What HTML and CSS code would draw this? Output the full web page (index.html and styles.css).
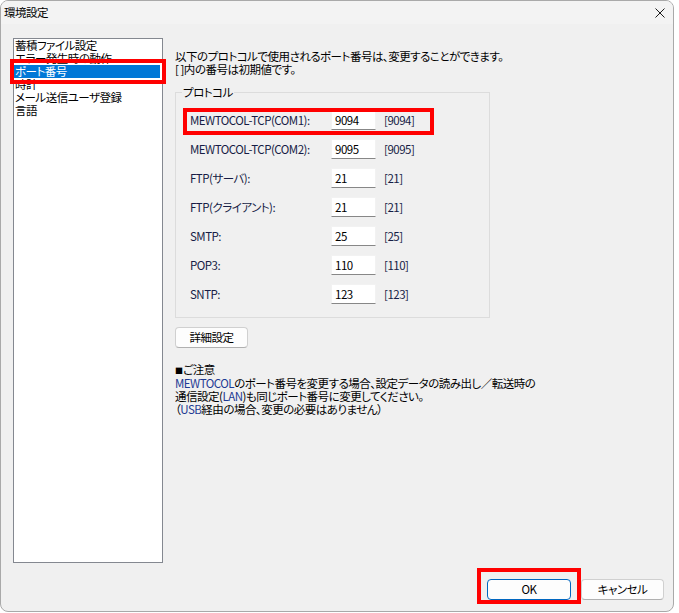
FILE: index.html
```html
<!DOCTYPE html>
<html lang="ja">
<head>
<meta charset="utf-8">
<title>環境設定</title>
<link rel="stylesheet" href="styles.css">
</head>
<body>
<div class="window">
  <div class="titlebar">
    <span class="title">環境設定</span>
    <svg class="close" width="10" height="10" viewBox="0 0 10 10"><path d="M0.5 0.5 L9.5 9.5 M9.5 0.5 L0.5 9.5" stroke="#1b1b1b" stroke-width="1" fill="none"/></svg>
  </div>
  <div class="content">
    <ul class="navlist">
      <li>蓄積ファイル設定</li>
      <li>エラー発生時の動作</li>
      <li class="selected">ポート番号</li>
      <li>時計</li>
      <li>メール送信ユーザ登録</li>
      <li>言語</li>
    </ul>
    <div class="panel">
      <p class="intro">以下のプロトコルで使用されるポート番号は、変更することができます。<br>[ ]内の番号は初期値です。</p>
      <fieldset class="group">
        <legend>プロトコル</legend>
        <div class="rows">
          <span class="lbl">MEWTOCOL-TCP(COM1):</span><input class="port" type="text" value="9094"><span class="def">[9094]</span>
          <span class="lbl">MEWTOCOL-TCP(COM2):</span><input class="port" type="text" value="9095"><span class="def">[9095]</span>
          <span class="lbl">FTP(サーバ):</span><input class="port" type="text" value="21"><span class="def">[21]</span>
          <span class="lbl">FTP(クライアント):</span><input class="port" type="text" value="21"><span class="def">[21]</span>
          <span class="lbl">SMTP:</span><input class="port" type="text" value="25"><span class="def">[25]</span>
          <span class="lbl">POP3:</span><input class="port" type="text" value="110"><span class="def">[110]</span>
          <span class="lbl">SNTP:</span><input class="port" type="text" value="123"><span class="def">[123]</span>
        </div>
      </fieldset>
      <button class="btn detail" type="button">詳細設定</button>
      <p class="note"><span class="sq">■</span>ご注意<br><span class="lat">MEWTOCOL</span>のポート番号を変更する場合、設定データの読み出し／転送時の<br>通信設定(<span class="lat">LAN</span>)も同じポート番号に変更してください。<br>（<span class="lat">USB</span>経由の場合、変更の必要はありません）</p>
    </div>
  </div>
  <div class="footer">
    <button class="btn ok" type="button">OK</button>
    <button class="btn cancel" type="button">キャンセル</button>
  </div>
  <div class="mark mark-list"></div>
  <div class="mark mark-row"></div>
  <div class="mark mark-ok"></div>
</div>
</body>
</html>
```

FILE: styles.css
```css
* { box-sizing: border-box; }
html, body { margin: 0; padding: 0; }
body {
  background: #ffffff;
  font-family: "Noto Sans CJK JP", "Liberation Sans", sans-serif;
  font-size: 11.5px;
  letter-spacing: -0.5px;
  line-height: 13px;
  color: #000;
  font-feature-settings: "palt";
}
.window {
  position: relative;
  width: 674px;
  height: 612px;
  background: #f0f0f0;
  border: 1px solid #a9a9a9;
  border-radius: 8px;
  overflow: hidden;
  display: flex;
  flex-direction: column;
}
.titlebar {
  height: 23px;
  background: #f3f3f3;
  display: flex;
  align-items: center;
  justify-content: space-between;
  padding: 0 8px 0 3px;
}
.title { color: #000; }
.content {
  display: flex;
  padding: 14px 0 0 12px;
  gap: 12px;
}
.navlist {
  list-style: none;
  margin: 0;
  padding: 0;
  width: 150px;
  height: 525px;
  background: #fff;
  border: 1px solid #848890;
}
.navlist li {
  height: 13px;
  line-height: 13px;
  padding-left: 1px;
  margin: 0 2px 0 0;
  white-space: nowrap;
}
.navlist li.selected {
  background: #0078d7;
  color: #fff;
}
.panel {
  padding-top: 12px;
  display: flex;
  flex-direction: column;
  align-items: flex-start;
}
.intro { margin: 0; white-space: nowrap; }
.group {
  margin: 10px 0 0 0;
  width: 315px;
  border: 1px solid #dcdcdc;
  padding: 11px 14px 13px 14px;
  min-inline-size: 0;
}
.group legend {
  padding: 0 1px;
  margin-left: -8px;
  line-height: 13px;
}
.rows {
  display: grid;
  grid-template-columns: 141px 45px auto;
  grid-auto-rows: 20px;
  row-gap: 9px;
  align-items: center;
}
.lbl { color: #161c45; white-space: nowrap; }
.def { color: #161c45; padding-left: 8px; }
.port {
  width: 45px;
  height: 20px;
  font: inherit;
  letter-spacing: inherit;
  font-feature-settings: "palt";
  color: #000;
  background: #fff;
  border: 1px solid #f2f2f2;
  border-bottom-color: #878787;
  padding: 0 3px;
  margin: 0;
  outline: none;
}
.btn {
  font: inherit;
  letter-spacing: inherit;
  font-feature-settings: "palt";
  color: #000;
  background: #fdfdfd;
  border: 1px solid #d0d0d0;
  border-bottom-color: #b0b0b0;
  border-radius: 4px;
  height: 21px;
  padding: 0;
  margin: 0;
}
.detail {
  width: 73px;
  margin-top: 9px;
}
.note {
  margin: 15px 0 0 0;
  white-space: nowrap;
}
.sq { font-size: 8px; letter-spacing: 0; }
.lat { color: #1d3a94; }
.footer {
  display: flex;
  justify-content: flex-end;
  gap: 10px;
  padding: 16px 9px 0 0;
}
.ok {
  width: 84px;
  border: 1px solid #0067c0;
  background: #fdfdfd;
}
.cancel { width: 83px; }
.mark {
  position: absolute;
  border: 4px solid #ff0000;
}
.mark-list { left: 9px; top: 58px; width: 156px; height: 25px; }
.mark-row { left: 182px; top: 107px; width: 251px; height: 27px; }
.mark-ok { left: 476px; top: 567px; width: 104px; height: 36px; }
```
